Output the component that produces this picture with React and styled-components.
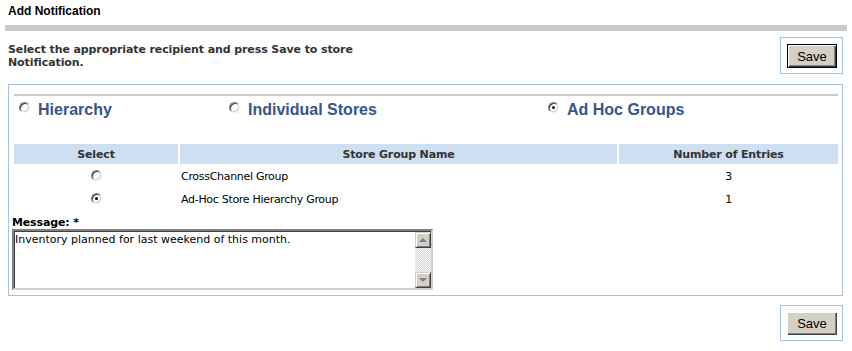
import React from 'react'
import styled, { createGlobalStyle } from 'styled-components'

const GlobalStyle = createGlobalStyle`
  body {
    margin: 0;
    background: #fff;
    font-family: "DejaVu Sans", Verdana, sans-serif;
    font-size: 11px;
    color: #000;
  }
`

const Page = styled.div`
  padding: 0 9px 9px 8px;
`

const Title = styled.div`
  padding-top: 4px;
  font-family: "Liberation Sans", Arial, sans-serif;
  font-weight: 700;
  font-size: 12px;
  line-height: 15px;
`

const Bar = styled.div`
  margin: 6px -4px 0 -3px;
  height: 6px;
  background: #cbcbcb;
`

const TopRow = styled.div`
  display: flex;
  justify-content: space-between;
  align-items: flex-start;
  margin-top: 6px;
`

const Intro = styled.div`
  margin-top: 6px;
  width: 360px;
  font-weight: 700;
  font-size: 11px;
  line-height: 13px;
  letter-spacing: -0.1px;
  color: #333;
`

const SaveBox = styled.div`
  border: 1px solid #a3c2dd;
  padding: 6px 5px 5px 6px;
`

const Button = styled.button`
  display: block;
  width: 50px;
  height: ${(p) => (p.$default ? 24 : 23)}px;
  padding: 0;
  background: #d4d0c8;
  font-family: "Liberation Sans", Arial, sans-serif;
  font-size: 13px;
  color: #000;
  border: ${(p) => (p.$default ? '1px solid #000' : 'none')};
  box-shadow: inset 1px 1px #fff, inset -1px -1px #404040, inset -2px -2px #808080;
  cursor: pointer;
`

const Panel = styled.div`
  margin-top: 10px;
  border: 1px solid #a3c2dd;
  padding: 9px 4px 5px 5px;
`

const Rule = styled.div`
  height: 2px;
  background: #cbcbcb;
`

const TypeRow = styled.div`
  display: grid;
  grid-template-columns: 210px 319px 1fr;
  padding: 5px 0 23px;
`

const TypeOption = styled.label`
  display: flex;
  align-items: flex-start;
  gap: 8px;
  padding-left: 5px;
  font-family: "Liberation Sans", Arial, sans-serif;
  font-weight: 700;
  font-size: 16px;
  line-height: 18px;
  color: #36568a;
  span:first-child {
    margin-top: 1px;
  }
`

const Radio = styled.span`
  position: relative;
  display: inline-block;
  flex: none;
  width: 11px;
  height: 11px;
  box-sizing: border-box;
  border-radius: 50%;
  background: #fff;
  border: 1px solid;
  border-color: #808080 #f0f0f0 #f0f0f0 #808080;
  box-shadow: inset 1px 1px #404040, inset -1px -1px #d4d0c8;
  &::after {
    content: '';
    display: ${(p) => (p.$checked ? 'block' : 'none')};
    position: absolute;
    left: 3px;
    top: 3px;
    width: 3px;
    height: 3px;
    border-radius: 50%;
    background: #000;
  }
`

const Table = styled.table`
  width: calc(100% + 4px);
  margin: 0 -2px;
  border-collapse: separate;
  border-spacing: 2px;
  table-layout: fixed;
`

const Th = styled.th`
  height: 20px;
  padding: 0;
  background: #cddff0;
  font-weight: 700;
  font-size: 11px;
  letter-spacing: -0.15px;
  color: #333;
  text-align: center;
`

const Td = styled.td`
  height: 21px;
  padding: 0 1px;
  text-align: ${(p) => p.$align || 'left'};
  vertical-align: middle;
  letter-spacing: -0.3px;
  color: #000;
`

const MessageBlock = styled.div`
  margin: 4px 0 0 -2px;
`

const Label = styled.div`
  font-weight: 700;
  font-size: 11px;
  line-height: 13px;
  letter-spacing: -0.15px;
  color: #000;
`

const TextBox = styled.div`
  display: flex;
  width: 421px;
  height: 61px;
  box-sizing: border-box;
  border: 2px solid;
  border-color: #808080 #d4d0c8 #d4d0c8 #808080;
  box-shadow: inset 1px 1px #404040;
  background: #fff;
`

const TextValue = styled.div`
  flex: 1;
  padding: 2px 0 0 1px;
  line-height: 13px;
`

const ScrollBar = styled.div`
  display: flex;
  flex-direction: column;
  width: 16px;
  margin: 1px 0 0;
  background: repeating-conic-gradient(#fff 0 25%, #d4d0c8 0 50%) 0 0 / 2px 2px;
`

const ScrollTrack = styled.div`
  flex: 1;
`

const ScrollButton = styled.div`
  display: flex;
  align-items: center;
  justify-content: center;
  height: 16px;
  box-sizing: border-box;
  background: #d4d0c8;
  border: 1px solid;
  border-color: #d4d0c8 #404040 #404040 #d4d0c8;
  box-shadow: inset 1px 1px #fff, inset -1px -1px #808080;
  &::after {
    content: '';
    border-left: 4px solid transparent;
    border-right: 4px solid transparent;
    border-${(p) => (p.$down ? 'top' : 'bottom')}: 4px solid #808080;
  }
`

const BottomRow = styled.div`
  display: flex;
  justify-content: flex-end;
  margin-top: 9px;
`

const groups = [
  { name: 'CrossChannel Group', entries: 3, checked: false },
  { name: 'Ad-Hoc Store Hierarchy Group', entries: 1, checked: true },
]

const types = [
  { label: 'Hierarchy', checked: false },
  { label: 'Individual Stores', checked: false },
  { label: 'Ad Hoc Groups', checked: true },
]

export default function App() {
  return (
    <Page>
      <GlobalStyle />
      <Title>Add Notification</Title>
      <Bar />
      <TopRow>
        <Intro>Select the appropriate recipient and press Save to store Notification.</Intro>
        <SaveBox>
          <Button $default>Save</Button>
        </SaveBox>
      </TopRow>
      <Panel>
        <Rule />
        <TypeRow>
          {types.map((t) => (
            <TypeOption key={t.label}>
              <Radio $checked={t.checked} />
              <span>{t.label}</span>
            </TypeOption>
          ))}
        </TypeRow>
        <Table>
          <colgroup>
            <col style={{ width: 164 }} />
            <col style={{ width: 437 }} />
            <col />
          </colgroup>
          <thead>
            <tr>
              <Th>Select</Th>
              <Th>Store Group Name</Th>
              <Th>Number of Entries</Th>
            </tr>
          </thead>
          <tbody>
            {groups.map((g) => (
              <tr key={g.name}>
                <Td $align="center"><Radio $checked={g.checked} /></Td>
                <Td>{g.name}</Td>
                <Td $align="center">{g.entries}</Td>
              </tr>
            ))}
          </tbody>
        </Table>
        <MessageBlock>
          <Label>Message: *</Label>
          <TextBox>
            <TextValue>Inventory planned for last weekend of this month.</TextValue>
            <ScrollBar>
              <ScrollButton />
              <ScrollTrack />
              <ScrollButton $down />
            </ScrollBar>
          </TextBox>
        </MessageBlock>
      </Panel>
      <BottomRow>
        <SaveBox>
          <Button>Save</Button>
        </SaveBox>
      </BottomRow>
    </Page>
  )
}
